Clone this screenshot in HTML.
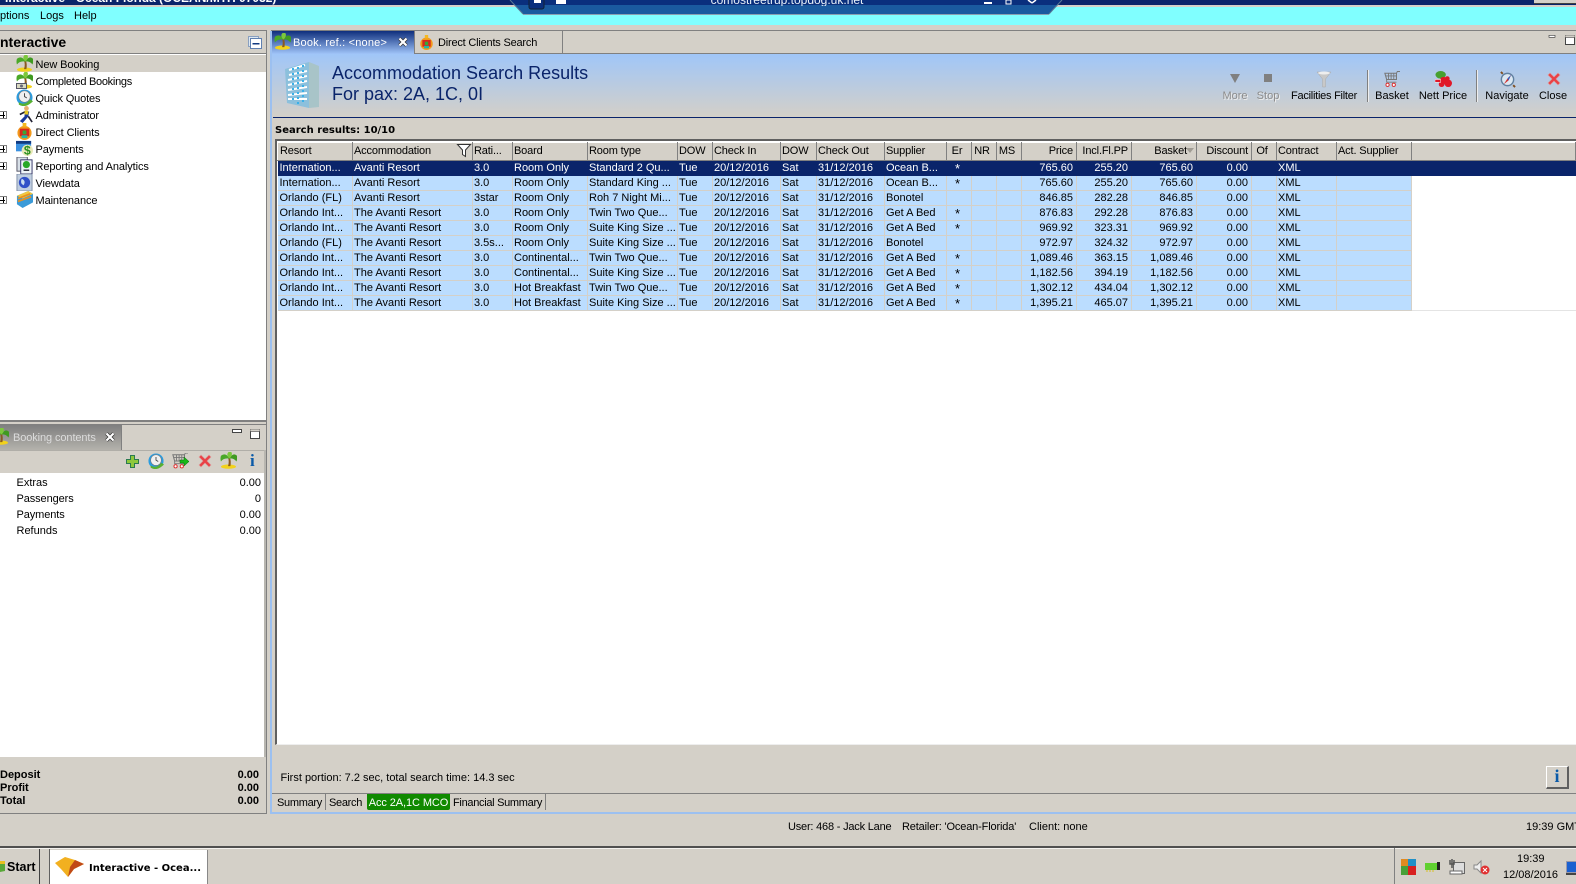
<!DOCTYPE html>
<html><head><meta charset="utf-8"><title>Interactive</title>
<style>
html,body{margin:0;padding:0}
body{width:1576px;height:884px;position:relative;overflow:hidden;background:#d4d0c8;font:11px/15px "Liberation Sans",sans-serif;color:#000}
.a{position:absolute;white-space:nowrap}
.r{position:absolute;white-space:nowrap;text-align:right}
.b{font-weight:bold}
svg.i{position:absolute;overflow:visible}
table{border-collapse:collapse;table-layout:fixed;position:absolute;left:277px;top:142px;width:1299px}
td,th{padding:0 0 0 2px;overflow:hidden;white-space:nowrap;font-weight:normal;text-align:left;height:15px;line-height:14px;box-sizing:border-box}
td+td,th+th{padding-left:1px}
th{height:18px;background:#d4d0c8;border-top:1px solid #fff;border-left:1px solid #fff;border-right:1px solid #808080;border-bottom:1px solid #808080;line-height:17px;letter-spacing:-.15px}
tbody td{background:#bbddff;border-right:1px solid #d4d0c8;border-bottom:1px solid #d4d0c8}
tbody td.f{background:#fff;border:0}
tbody tr:last-child td.f{border-bottom:1px solid #e4e4e4}
tr.s td,tr.s td.f{background:#0a246a;color:#fff;border-color:#0a246a}
td.n,th.n{text-align:right;padding:0 3px 0 0}
th.c{text-align:center;padding:0 4px 0 0}
td.st{padding-left:8px;line-height:11px;vertical-align:top;padding-top:2px;font-size:13px}
.tree{left:35.5px;letter-spacing:-.1px}
.pm{position:absolute;left:0;width:6px;height:6px;border:1px solid #808080;background:#fff;border-left:0}
.pm:before{content:"";position:absolute;left:0;top:2.5px;width:5px;height:1px;background:#000}
.pm:after{content:"";position:absolute;left:2.5px;top:0;width:1px;height:6px;background:#000}
.tb{font-size:11px;transform:translateX(-50%)}
.sq{letter-spacing:-.3px}
</style></head><body>
<svg width="0" height="0" style="position:absolute">
<defs>
<symbol id="palm" viewBox="0 0 18 18"><ellipse cx="9" cy="15.500" rx="8" ry="2.300" fill="#f2d21c"/><path d="M8.500 6Q10 10 8.500 15L11 15Q12 10 10.500 6Z" fill="#8a5a20"/><path d="M10 7Q6 0 1 4Q0 7 1 10Q4 6 10 7Z" fill="#4aa828"/><path d="M10 7Q14 0 18 4Q18.500 7 17.500 10Q14 6 10 7Z" fill="#3f9a20"/><path d="M10 7Q6 3 9 0H12Q14 3 10 7Z" fill="#7cc83c"/></symbol>
<symbol id="clock" viewBox="0 0 18 18"><circle cx="9" cy="9" r="8.500" fill="#2a9ce0"/><circle cx="9" cy="8" r="6" fill="#f0f0f0" stroke="#777" stroke-width=".6"/><path d="M9 4.500V8L11.500 9.500" stroke="#444" fill="none"/><path d="M3 14Q10 18 15 11L18 13Q10 21 3 16.500Z" fill="#58b030"/></symbol>
<symbol id="x" viewBox="0 0 14 14"><path d="M3 1 7 5 11 1 13 3 9 7 13 11 11 13 7 9 3 13 1 11 5 7 1 3Z" fill="#e94045" stroke="#d99" stroke-width=".6"/></symbol>
<symbol id="cart" viewBox="0 0 18 18"><path d="M1 2H14V9H3Z" fill="none" stroke="#777" stroke-width="1.200"/><path d="M5 2V9M8 2V9M11 2V9M2 5H14M14 2 15 0H18M3 9V12H14" fill="none" stroke="#777"/><circle cx="4" cy="15" r="1.800" fill="#fff" stroke="#d22"/><circle cx="11" cy="15" r="1.800" fill="#fff" stroke="#d22"/></symbol>
<symbol id="cl" viewBox="0 0 10 10"><path d="M1.500 1.500 8.500 8.500M8.500 1.500 1.500 8.500" stroke="#333" stroke-width="3.600"/><path d="M1.500 1.500 8.500 8.500M8.500 1.500 1.500 8.500" stroke="#fff" stroke-width="2.200"/></symbol>
<symbol id="person" viewBox="0 0 18 18"><circle cx="10" cy="2.500" r="2.500" fill="#e9b070"/><path d="M8 5 13 6 12 11 6 18 3 16 8 11Z" fill="#1a3a9a"/><path d="M9 6 3 9M12 11 16 17" stroke="#223" stroke-width="1.800"/><rect x="8" y="5" width="4" height="4" fill="#e8c820"/></symbol>
<symbol id="gift" viewBox="0 0 18 18"><circle cx="9" cy="10.500" r="7.500" fill="#f29a1c"/><rect x="4" y="6" width="10" height="8" fill="#d8281c"/><rect x="6" y="13" width="6" height="3" fill="#20b8a8"/><rect x="7" y="8" width="4" height="4" fill="#38a838"/><path d="M7 0H11V4H7Z" fill="#f4b820"/></symbol>
<symbol id="pay" viewBox="0 0 18 18"><rect x="0" y="1" width="16" height="11" fill="#3a90e0"/><rect x="0" y="1" width="16" height="3" fill="#123a80"/><circle cx="12" cy="11" r="6" fill="#e8e8b8"/><text x="12" y="15.500" font-size="13" font-weight="bold" fill="#2a9020" text-anchor="middle" font-family="Liberation Sans">$</text></symbol>
<symbol id="rep" viewBox="0 0 18 18"><rect x="1" y="0" width="11" height="15" fill="#d8e0e8" stroke="#556"/><rect x="5" y="3" width="12" height="15" fill="#eef4f8" stroke="#336"/><circle cx="11" cy="8" r="3.800" fill="#28a828"/><path d="M8 14H14" stroke="#223" stroke-width="1.500"/></symbol>
<symbol id="view" viewBox="0 0 18 18"><rect x="1" y="0" width="16" height="18" fill="#c0cee0" stroke="#8090a8"/><circle cx="9" cy="9" r="6" fill="#3050c8"/><path d="M6 5Q11 7 8 12Q4 10 6 5Z" fill="#c8dcf0"/></symbol>
<symbol id="maint" viewBox="0 0 18 18"><path d="M1 5 13 0 18 3V12L7 18 1 14Z" fill="#3a9ad8"/><path d="M1 5 13 0 18 3 7 8Z" fill="#f2c840"/><path d="M2 8 15 3M2 11 16 6" stroke="#e89020" stroke-width="1.800"/></symbol>
<symbol id="comp" viewBox="0 0 18 18"><circle cx="9" cy="9" r="6.500" fill="#dce8f2" stroke="#6080a0" stroke-width="1.500"/><path d="M13 4 9 8 5 14 10 10Z" fill="#d03030"/><path d="M13 4 9 8 10 10Z" fill="#3060c0"/><path d="M2 1 4 3M15 15 17 17" stroke="#805020" stroke-width="2"/></symbol>
<symbol id="nett" viewBox="0 0 18 18"><ellipse cx="6" cy="4" rx="5.500" ry="4" fill="#48a030"/><circle cx="9" cy="10" r="3.800" fill="#e01828"/><circle cx="14" cy="13" r="4" fill="#e01828"/><circle cx="7" cy="14" r="3" fill="#e01828"/><circle cx="13" cy="8" r="2.500" fill="#e01828"/><rect x="0" y="9" width="6" height="3" fill="#e01828" stroke="#fff" stroke-width=".5"/></symbol>
<symbol id="min" viewBox="0 0 10 6"><rect x=".5" y=".5" width="9" height="3" fill="#fff" stroke="#444"/></symbol>
<symbol id="max" viewBox="0 0 10 10"><rect x=".5" y=".5" width="9" height="9" fill="#fff" stroke="#444"/><rect x="0" y="0" width="10" height="2.500" fill="#d4d0c8" stroke="#444" stroke-width=".6"/></symbol>
</defs></svg>

<!-- title bar -->
<div class="a" style="left:0;top:0;width:1576px;height:5px;background:#0a246a;overflow:hidden"><span class="a b" style="left:5px;top:-9px;color:#fff;font-size:12px;line-height:15px">Interactive - Ocean Florida (OCEAN/MTH 07032)</span></div>
<div class="a" style="left:0;top:5px;width:1576px;height:2px;background:#d4d0c8"></div>
<div class="a" style="left:1534px;top:0;width:42px;height:3px;background:#d4d0c8;border-bottom:1px solid #404040"></div>
<div class="a" style="left:0;top:7px;width:1576px;height:18px;background:#80ffff"></div>
<span class="a" style="left:0;top:9px;">ptions</span><span class="a" style="left:40px;top:9px">Logs</span><span class="a" style="left:74px;top:9px">Help</span>
<!-- connection bar -->
<svg class="i" style="left:505px;top:0" width="570" height="16"><path d="M5 0H557L544 14H18Z" fill="#1a5a9f"/><path d="M5 0H557L552 5H10Z" fill="#0a2f7d"/><path d="M18 14.500H544" stroke="#8aa0b0"/><path d="M5 0 18 14M557 0 544 14" stroke="#5a7a96"/><rect x="24" y="-3" width="15" height="12" rx="2" fill="#0a2f7d" stroke="#123"/><rect x="29" y="0" width="7" height="3" fill="#fff"/><rect x="51" y="0" width="10" height="4" fill="#fff"/><rect x="479" y="2" width="8" height="2" fill="#fff"/><rect x="501" y="0" width="5" height="4" fill="none" stroke="#fff"/><path d="M523 0 527 3M531 0 527 3" stroke="#fff" stroke-width="1.500"/></svg>
<div class="a" style="left:597px;top:0;width:380px;height:6px;overflow:hidden"><span class="a" style="left:0;width:380px;text-align:center;top:-7px;color:#e8f0f8;font-size:12px">comostreetrup.topdog.uk.net</span></div>

<!-- separator -->
<div class="a" style="left:0;top:30px;width:267px;height:1px;background:#808080"></div>
<div class="a" style="left:271px;top:30px;width:1305px;height:1px;background:#808080"></div>

<!-- left top panel -->
<div class="a" style="left:0;top:31px;width:266px;height:22px;background:#d4d0c8"></div>
<span class="a b" style="left:0;top:34px;font-size:14px;line-height:17px">nteractive</span>
<svg class="i" style="left:248px;top:36px" width="14" height="13"><rect x=".5" y=".5" width="10" height="10" fill="#dde8f2" stroke="#8aa0c0"/><rect x="2.500" y="2.500" width="11" height="10" fill="#fff" stroke="#6080b0"/><rect x="4.500" y="7" width="7" height="1.500" fill="#123a80"/></svg>
<div class="a" style="left:0;top:53px;width:266px;height:2px;background:#808080"></div>
<div class="a" style="left:0;top:54px;width:266px;height:366px;background:#fff"></div>
<div class="a" style="left:0;top:55px;width:266px;height:17px;background:#d4d0c8"></div>
<div class="a" style="left:266px;top:30px;width:1px;height:390px;background:#808080"></div>
<svg class="i" style="left:16px;top:55px" width="17" height="17"><use href="#palm"/></svg>
<svg class="i" style="left:16px;top:72px" width="17" height="17"><use href="#palm"/></svg>
<svg class="i" style="left:16px;top:83px" width="11" height="6"><rect x=".5" y=".5" width="10" height="5" fill="#d8d8c0" stroke="#556"/><circle cx="5.500" cy="3" r="1.500" fill="#667"/></svg>
<svg class="i" style="left:16px;top:89px" width="17" height="17"><use href="#clock"/></svg>
<svg class="i" style="left:17px;top:106px" width="17" height="17"><use href="#person"/></svg>
<svg class="i" style="left:16px;top:123px" width="17" height="17"><use href="#gift"/></svg>
<svg class="i" style="left:16px;top:140px" width="17" height="17"><use href="#pay"/></svg>
<svg class="i" style="left:16px;top:157px" width="17" height="17"><use href="#rep"/></svg>
<svg class="i" style="left:16px;top:174px" width="17" height="17"><use href="#view"/></svg>
<svg class="i" style="left:16px;top:191px" width="17" height="17"><use href="#maint"/></svg>
<span class="a tree" style="top:58px">New Booking</span>
<span class="a tree" style="top:75px;letter-spacing:-.28px">Completed Bookings</span>
<span class="a tree" style="top:92px;letter-spacing:-.15px">Quick Quotes</span>
<span class="a tree" style="top:109px">Administrator</span>
<span class="a tree" style="top:126px">Direct Clients</span>
<span class="a tree" style="top:143px">Payments</span>
<span class="a tree" style="top:160px">Reporting and Analytics</span>
<span class="a tree" style="top:177px">Viewdata</span>
<span class="a tree" style="top:194px">Maintenance</span>
<i class="pm" style="top:111px"></i><i class="pm" style="top:145px"></i><i class="pm" style="top:162px"></i><i class="pm" style="top:196px"></i>

<!-- left lower panel -->
<div class="a" style="left:0;top:420px;width:267px;height:2px;background:#808080"></div>
<div class="a" style="left:0;top:424px;width:266px;height:1px;background:#808080"></div>
<div class="a" style="left:0;top:425px;width:121px;height:25px;background:linear-gradient(#7f7f7f,#b4b2ac)"></div>
<div class="a" style="left:121px;top:425px;width:1px;height:25px;background:#808080"></div>
<div class="a" style="left:0;top:450px;width:266px;height:1px;background:#b0aea8"></div>
<svg class="i" style="left:-8px;top:428px" width="17" height="17"><use href="#palm"/></svg>
<span class="a" style="left:13px;top:431px;color:#dcdcdc;letter-spacing:-.1px">Booking contents</span>
<svg class="i" style="left:105px;top:432px" width="10" height="10"><use href="#cl"/></svg>
<svg class="i" style="left:232px;top:429px" width="10" height="6"><use href="#min"/></svg>
<svg class="i" style="left:250px;top:429px" width="10" height="10"><use href="#max"/></svg>
<svg class="i" style="left:126px;top:455px" width="13" height="13"><path d="M4.500 .5H8.500V4.500H12.500V8.500H8.500V12.500H4.500V8.500H.5V4.500H4.500Z" fill="#8ec83c" stroke="#2a7a50"/></svg>
<svg class="i" style="left:148px;top:453px" width="16" height="16"><use href="#clock"/></svg>
<svg class="i" style="left:172px;top:453px" width="16" height="16"><use href="#cart"/></svg>
<svg class="i" style="left:180px;top:457px" width="9" height="9"><path d="M0 3H4V0L9 4.500 4 9V6H0Z" fill="#18b818" stroke="#0a6a0a" stroke-width=".5"/></svg>
<svg class="i" style="left:198px;top:454px" width="14" height="14"><use href="#x"/></svg>
<svg class="i" style="left:220px;top:452px" width="17" height="17"><use href="#palm"/></svg>
<span class="a b" style="left:250px;top:452px;font:bold 17px/18px 'Liberation Serif',serif;color:#0a5aa8">i</span>
<div class="a" style="left:0;top:473px;width:264px;height:284px;background:#fff"></div>
<div class="a" style="left:264px;top:450px;width:2px;height:307px;background:#b8b6b0"></div>
<span class="a" style="left:16.500px;top:476px">Extras</span><span class="r" style="right:1315px;top:476px">0.00</span>
<span class="a" style="left:16.500px;top:492px;letter-spacing:-.1px">Passengers</span><span class="r" style="right:1315px;top:492px">0</span>
<span class="a" style="left:16.500px;top:508px;letter-spacing:-.1px">Payments</span><span class="r" style="right:1315px;top:508px">0.00</span>
<span class="a" style="left:16.500px;top:524px">Refunds</span><span class="r" style="right:1315px;top:524px">0.00</span>
<span class="a b" style="left:0;top:768px">Deposit</span><span class="r b" style="right:1317px;top:768px">0.00</span>
<span class="a b" style="left:0;top:781px">Profit</span><span class="r b" style="right:1317px;top:781px">0.00</span>
<span class="a b" style="left:0;top:794px">Total</span><span class="r b" style="right:1317px;top:794px">0.00</span>
<div class="a" style="left:266px;top:420px;width:1px;height:394px;background:#808080"></div>
<div class="a" style="left:0;top:813px;width:267px;height:1px;background:#808080"></div>

<!-- right panel frame -->
<div class="a" style="left:270px;top:31px;width:2px;height:783px;background:#9cc0f0"></div>
<div class="a" style="left:270px;top:812px;width:1306px;height:2px;background:#9cc0f0"></div>

<!-- tabs -->
<div class="a" style="left:272px;top:31px;width:142px;height:23px;background:linear-gradient(#0f2f7d,#a0c4f8)"></div>
<div class="a" style="left:414px;top:31px;width:149px;height:22px;background:#d4d0c8;border-left:1px solid #808080;border-right:1px solid #808080;box-sizing:border-box"></div>
<div class="a" style="left:414px;top:53px;width:1162px;height:1px;background:#808080"></div>
<svg class="i" style="left:274px;top:33px" width="17" height="17"><use href="#palm"/></svg>
<span class="a" style="left:293px;top:36px;color:#fff;letter-spacing:.2px">Book. ref.: &lt;none&gt;</span>
<svg class="i" style="left:398px;top:37px" width="10" height="10"><use href="#cl"/></svg>
<svg class="i" style="left:419px;top:34px" width="15" height="17"><use href="#gift"/></svg>
<span class="a" style="left:438px;top:36px;letter-spacing:-.2px">Direct Clients Search</span>
<svg class="i" style="left:1547px;top:35px" width="10" height="4"><use href="#min"/></svg>
<svg class="i" style="left:1565px;top:35px" width="10" height="10"><use href="#max"/></svg>

<!-- banner -->
<div class="a" style="left:272px;top:54px;width:1304px;height:63px;background:linear-gradient(#a0c6f8,#d4d0c8)"></div>
<div class="a" style="left:273px;top:117px;width:1303px;height:1px;background:#0a246a"></div>
<svg class="i" style="left:285px;top:61px" width="36" height="48"><path d="M0 8 24 1V47L2 42Z" fill="#8cc0dc"/><path d="M24 1 34 5V46L24 47Z" fill="#a8c4c8"/><path d="M4 9 20 4M4 14 22 10M3 19 22 15M3 24 22 20M3 29 22 26M3 34 22 32M3 38 22 38" stroke="#fff" stroke-width="2"/><path d="M8 7V42M13 6V43M18 4V44" stroke="#3ab0e8" stroke-width="2" stroke-dasharray="2 3"/></svg>
<span class="a" style="left:332px;top:62px;font-size:18px;line-height:22px;color:#0a246a">Accommodation Search Results</span>
<span class="a" style="left:332px;top:83px;font-size:18px;line-height:22px;color:#0a246a">For pax: 2A, 1C, 0I</span>
<svg class="i" style="left:1229px;top:73px" width="12" height="11"><path d="M1 1H11L6 10Z" fill="#808080"/></svg>
<span class="a tb" style="left:1235px;top:89px;color:#8c8c8c;text-shadow:1px 1px 0 #eee">More</span>
<div class="a" style="left:1264px;top:74px;width:8px;height:8px;background:#808080"></div>
<span class="a tb" style="left:1268px;top:89px;color:#8c8c8c;text-shadow:1px 1px 0 #eee">Stop</span>
<svg class="i" style="left:1317px;top:71px" width="14" height="17"><path d="M0 1H14L8.500 8V16H5.500V8Z" fill="#c8c8c8" stroke="#aaa" stroke-width=".5"/><ellipse cx="7" cy="2" rx="6" ry="1.500" fill="#eee"/></svg>
<span class="a tb" style="left:1324px;top:89px;letter-spacing:-.25px">Facilities Filter</span>
<div class="a" style="left:1367px;top:70px;width:1px;height:32px;background:#808080;border-right:1px solid #eee"></div>
<svg class="i" style="left:1384px;top:71px" width="16" height="17"><use href="#cart"/></svg>
<span class="a tb" style="left:1392px;top:89px">Basket</span>
<svg class="i" style="left:1435px;top:71px" width="17" height="17"><use href="#nett"/></svg>
<span class="a tb" style="left:1443px;top:89px">Nett Price</span>
<div class="a" style="left:1476px;top:70px;width:1px;height:32px;background:#808080;border-right:1px solid #eee"></div>
<svg class="i" style="left:1499px;top:71px" width="17" height="17"><use href="#comp"/></svg>
<span class="a tb" style="left:1507px;top:89px">Navigate</span>
<svg class="i" style="left:1547px;top:72px" width="14" height="14"><use href="#x"/></svg>
<span class="a tb" style="left:1553px;top:89px">Close</span>

<span class="a b" style="left:275px;top:123px;font:bold 10px/15px 'DejaVu Sans',sans-serif">Search results: 10/10</span>

<!-- grid -->
<div class="a" style="left:275px;top:139px;width:1301px;height:606px;background:#fff;border-top:2px solid #606060;border-left:2px solid #606060;box-sizing:border-box;border-bottom:1px solid #eee"></div>
<table>
<colgroup><col style="width:75px"><col style="width:120px"><col style="width:40px"><col style="width:75px"><col style="width:90px"><col style="width:35px"><col style="width:68px"><col style="width:36px"><col style="width:68px"><col style="width:62px"><col style="width:25px"><col style="width:25px"><col style="width:25px"><col style="width:55px"><col style="width:55px"><col style="width:65px"><col style="width:55px"><col style="width:25px"><col style="width:60px"><col style="width:75px"><col></colgroup>
<thead><tr><th>Resort</th><th>Accommodation</th><th>Rati...</th><th>Board</th><th>Room type</th><th>DOW</th><th>Check In</th><th>DOW</th><th>Check Out</th><th>Supplier</th><th class="c">Er</th><th class="c">NR</th><th class="c">MS</th><th class="n">Price</th><th class="n">Incl.Fl.PP</th><th class="n" style="padding-right:9px">Basket</th><th class="n">Discount</th><th class="c">Of</th><th>Contract</th><th>Act. Supplier</th><th></th></tr></thead>
<tbody>
<tr class="s"><td>Internation...</td><td>Avanti Resort</td><td>3.0</td><td>Room Only</td><td>Standard 2 Qu...</td><td>Tue</td><td>20/12/2016</td><td>Sat</td><td>31/12/2016</td><td>Ocean B...</td><td class="st">*</td><td></td><td></td><td class="n">765.60</td><td class="n">255.20</td><td class="n">765.60</td><td class="n">0.00</td><td></td><td>XML</td><td></td><td class="f"></td></tr>
<tr><td>Internation...</td><td>Avanti Resort</td><td>3.0</td><td>Room Only</td><td>Standard King ...</td><td>Tue</td><td>20/12/2016</td><td>Sat</td><td>31/12/2016</td><td>Ocean B...</td><td class="st">*</td><td></td><td></td><td class="n">765.60</td><td class="n">255.20</td><td class="n">765.60</td><td class="n">0.00</td><td></td><td>XML</td><td></td><td class="f"></td></tr>
<tr><td>Orlando (FL)</td><td>Avanti Resort</td><td>3star</td><td>Room Only</td><td>Roh 7 Night Mi...</td><td>Tue</td><td>20/12/2016</td><td>Sat</td><td>31/12/2016</td><td>Bonotel</td><td></td><td></td><td></td><td class="n">846.85</td><td class="n">282.28</td><td class="n">846.85</td><td class="n">0.00</td><td></td><td>XML</td><td></td><td class="f"></td></tr>
<tr><td>Orlando Int...</td><td>The Avanti Resort</td><td>3.0</td><td>Room Only</td><td>Twin Two Que...</td><td>Tue</td><td>20/12/2016</td><td>Sat</td><td>31/12/2016</td><td>Get A Bed</td><td class="st">*</td><td></td><td></td><td class="n">876.83</td><td class="n">292.28</td><td class="n">876.83</td><td class="n">0.00</td><td></td><td>XML</td><td></td><td class="f"></td></tr>
<tr><td>Orlando Int...</td><td>The Avanti Resort</td><td>3.0</td><td>Room Only</td><td>Suite King Size ...</td><td>Tue</td><td>20/12/2016</td><td>Sat</td><td>31/12/2016</td><td>Get A Bed</td><td class="st">*</td><td></td><td></td><td class="n">969.92</td><td class="n">323.31</td><td class="n">969.92</td><td class="n">0.00</td><td></td><td>XML</td><td></td><td class="f"></td></tr>
<tr><td>Orlando (FL)</td><td>The Avanti Resort</td><td>3.5s...</td><td>Room Only</td><td>Suite King Size ...</td><td>Tue</td><td>20/12/2016</td><td>Sat</td><td>31/12/2016</td><td>Bonotel</td><td></td><td></td><td></td><td class="n">972.97</td><td class="n">324.32</td><td class="n">972.97</td><td class="n">0.00</td><td></td><td>XML</td><td></td><td class="f"></td></tr>
<tr><td>Orlando Int...</td><td>The Avanti Resort</td><td>3.0</td><td>Continental...</td><td>Twin Two Que...</td><td>Tue</td><td>20/12/2016</td><td>Sat</td><td>31/12/2016</td><td>Get A Bed</td><td class="st">*</td><td></td><td></td><td class="n">1,089.46</td><td class="n">363.15</td><td class="n">1,089.46</td><td class="n">0.00</td><td></td><td>XML</td><td></td><td class="f"></td></tr>
<tr><td>Orlando Int...</td><td>The Avanti Resort</td><td>3.0</td><td>Continental...</td><td>Suite King Size ...</td><td>Tue</td><td>20/12/2016</td><td>Sat</td><td>31/12/2016</td><td>Get A Bed</td><td class="st">*</td><td></td><td></td><td class="n">1,182.56</td><td class="n">394.19</td><td class="n">1,182.56</td><td class="n">0.00</td><td></td><td>XML</td><td></td><td class="f"></td></tr>
<tr><td>Orlando Int...</td><td>The Avanti Resort</td><td>3.0</td><td>Hot Breakfast</td><td>Twin Two Que...</td><td>Tue</td><td>20/12/2016</td><td>Sat</td><td>31/12/2016</td><td>Get A Bed</td><td class="st">*</td><td></td><td></td><td class="n">1,302.12</td><td class="n">434.04</td><td class="n">1,302.12</td><td class="n">0.00</td><td></td><td>XML</td><td></td><td class="f"></td></tr>
<tr><td>Orlando Int...</td><td>The Avanti Resort</td><td>3.0</td><td>Hot Breakfast</td><td>Suite King Size ...</td><td>Tue</td><td>20/12/2016</td><td>Sat</td><td>31/12/2016</td><td>Get A Bed</td><td class="st">*</td><td></td><td></td><td class="n">1,395.21</td><td class="n">465.07</td><td class="n">1,395.21</td><td class="n">0.00</td><td></td><td>XML</td><td></td><td class="f"></td></tr>
</tbody></table>
<svg class="i" style="left:457px;top:144px" width="14" height="13"><path d="M.5 .5H13.500L8.500 6V12.500L5.500 10.500V6Z" fill="#fff" stroke="#333"/></svg>
<svg class="i" style="left:1186px;top:148px" width="8" height="5"><path d="M0 0H8L4 5Z" fill="#a09c94"/></svg>

<!-- bottom of right panel -->
<span class="a" style="left:280.500px;top:771px">First portion: 7.2 sec, total search time: 14.3 sec</span>
<div class="a" style="left:1546px;top:766px;width:23px;height:23px;box-sizing:border-box;background:#d4d0c8;border:1px solid #fff;border-right:2px solid #606060;border-bottom:2px solid #606060;text-align:center;font:bold 18px/19px 'Liberation Serif',serif;color:#0a5aa8">i</div>
<div class="a" style="left:272px;top:793px;width:1304px;height:1px;background:#808080"></div>
<span class="a sq" style="left:277px;top:796px">Summary</span>
<div class="a" style="left:325px;top:794px;width:1px;height:16px;background:#808080"></div>
<span class="a sq" style="left:329px;top:796px">Search</span>
<div class="a" style="left:367px;top:794px;width:83px;height:16px;background:#108a00;color:#fff;text-align:center;line-height:18px;border-radius:0 0 2px 2px;letter-spacing:-.1px">Acc 2A,1C MCO</div>
<span class="a sq" style="left:453px;top:796px">Financial Summary</span>
<div class="a" style="left:545px;top:794px;width:1px;height:16px;background:#808080"></div>

<!-- status -->
<span class="a" style="left:788px;top:820px;letter-spacing:-.2px">User: 468 - Jack Lane</span>
<span class="a" style="left:902px;top:820px;letter-spacing:-.15px">Retailer: 'Ocean-Florida'</span>
<span class="a" style="left:1029px;top:820px">Client: none</span>
<span class="a" style="left:1526px;top:820px">19:39 GMT</span>

<!-- taskbar -->
<div class="a" style="left:0;top:846px;width:1576px;height:2px;background:#505050"></div>
<div class="a" style="left:0;top:848px;width:1576px;height:1px;background:#f4f2ee"></div>
<div class="a" style="left:39px;top:849px;width:1px;height:35px;background:#404040"></div>
<div class="a" style="left:49px;top:849px;width:1px;height:35px;background:#606060"></div>
<svg class="i" style="left:0;top:859px" width="6" height="14"><path d="M0 2H5V12L0 13Z" fill="#58a838"/><path d="M0 2H5V5H0Z" fill="#e8c020"/></svg>
<span class="a b" style="left:7px;top:860px;font-size:12.500px">Start</span>
<div class="a" style="left:50px;top:850px;width:158px;height:34px;background:#fff;border-right:1px solid #888;box-sizing:border-box"></div>
<svg class="i" style="left:55px;top:855px" width="29" height="24"><path d="M0 8 10 2 20 5 29 9 19 14 13 22 6 14Z" fill="#f2b020"/><path d="M20 5 29 9 19 14 13 22 15 12Z" fill="#c04a18"/></svg>
<span class="a b" style="left:89px;top:861px;font:bold 10px/15px 'DejaVu Sans',sans-serif">Interactive - Ocea...</span>
<div class="a" style="left:1394px;top:848px;width:1px;height:36px;background:#808080"></div>
<svg class="i" style="left:1401px;top:859px" width="15" height="16"><rect width="7" height="7" fill="#e08a20"/><rect x="7" width="8" height="7" fill="#2090c8"/><rect y="7" width="7" height="9" fill="#48a038"/><rect x="7" y="7" width="8" height="9" fill="#d82020"/></svg>
<svg class="i" style="left:1425px;top:862px" width="16" height="10"><rect y="1" width="12" height="7" fill="#60d030"/><rect x="12" width="3" height="8" fill="#222"/><path d="M2 8V10M5 8V10M8 8V10" stroke="#d8c020"/></svg>
<svg class="i" style="left:1449px;top:859px" width="16" height="16"><rect x="4.500" y="3.500" width="11" height="11" fill="#ddd" stroke="#666"/><path d="M3 0V9M1 1V5H5V1" fill="none" stroke="#555" stroke-width="1.500"/><rect x="1" y="12" width="12" height="3" fill="#fff" stroke="#666"/></svg>
<svg class="i" style="left:1473px;top:860px" width="17" height="15"><path d="M1 5H4L8 1V13L4 9H1Z" fill="#eee" stroke="#888"/><circle cx="12" cy="10" r="4.500" fill="#e03030"/><path d="M10 8 14 12M14 8 10 12" stroke="#fff"/></svg>
<span class="a" style="left:1517px;top:852px">19:39</span>
<span class="a" style="left:1503px;top:868px">12/08/2016</span>
<svg class="i" style="left:1566px;top:861px" width="10" height="14"><rect x=".5" y=".5" width="10" height="11" fill="#1a60d0" stroke="#99a"/><rect x="0" y="12" width="10" height="2" fill="#444"/></svg>
</body></html>
